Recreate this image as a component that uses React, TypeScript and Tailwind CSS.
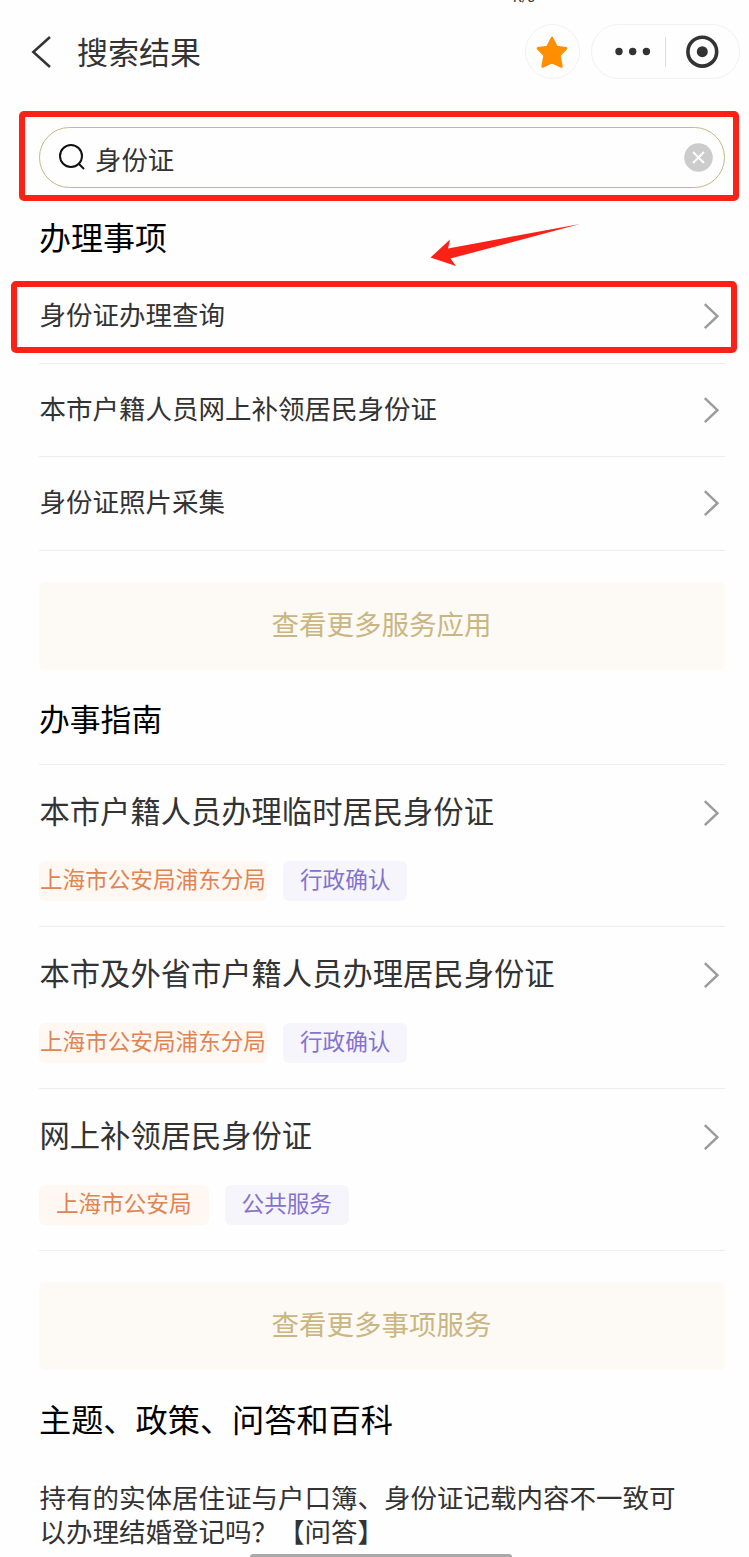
import type { ReactNode } from "react";

const services = [
  "身份证办理查询",
  "本市户籍人员网上补领居民身份证",
  "身份证照片采集",
];

const guides = [
  {
    title: "本市户籍人员办理临时居民身份证",
    office: "上海市公安局浦东分局",
    type: "行政确认",
    tight: true,
  },
  {
    title: "本市及外省市户籍人员办理居民身份证",
    office: "上海市公安局浦东分局",
    type: "行政确认",
    tight: true,
  },
  {
    title: "网上补领居民身份证",
    office: "上海市公安局",
    type: "公共服务",
    tight: false,
  },
];

function Chevron() {
  return (
    <svg className="mr-1 h-7 w-5 shrink-0" viewBox="0 0 20 28" fill="none">
      <path d="M3.8 2.2L16.4 14.2L3.8 26.2" stroke="#9c9c9c" strokeWidth="2.5" />
    </svg>
  );
}

function MoreButton({ children }: { children: ReactNode }) {
  return (
    <button className="mt-[31px] flex h-[88px] w-full items-center justify-center rounded-md bg-[#fdfaf5] pr-[1px] pb-[4px] text-[27.5px] text-[#cbb682]">
      {children}
    </button>
  );
}

function App() {
  return (
    <div className="relative h-[1557px] w-[749px] overflow-hidden bg-[#fefefe] font-['Noto_Sans_CJK_SC',sans-serif] text-[#333]">
      {/* status bar, scrolled almost out of view */}
      <div className="absolute top-[-11px] left-[513px] text-[14px] leading-[16px] font-['Roboto',sans-serif]">
        K/s
      </div>

      <header className="flex h-[103px] items-center pl-[30px] pr-[9px]">
        <svg className="h-9 w-6" viewBox="0 0 24 36" fill="none">
          <path d="M20 3L3.3 18L20 33" stroke="#333" strokeWidth="2.5" />
        </svg>
        <h1 className="ml-[23px] text-[31px]">搜索结果</h1>
        <div className="ml-auto flex h-[55px] w-[55px] items-center justify-center rounded-full border border-[#f1f1f1]">
          <svg className="mr-[2px] h-8 w-8" viewBox="0 0 32 32">
            <path
              d="M16 2L20.6 11L30 12.3L23.4 19.4L25.4 30.5L16 26L6.6 30.5L8.6 19.4L2 12.3L11.4 11Z"
              fill="#ff8f00"
              stroke="#ff8f00"
              strokeWidth="2.6"
              strokeLinejoin="round"
            />
          </svg>
        </div>
        <div className="ml-[11px] flex h-[55px] w-[149px] items-center rounded-full border border-[#f1f1f1]">
          <svg className="ml-[23px] h-8 w-9" viewBox="0 0 36 32" fill="#333">
            <circle cx="4" cy="15.5" r="3.7" />
            <circle cx="17.7" cy="15.5" r="3.7" />
            <circle cx="31.4" cy="15.5" r="3.7" />
          </svg>
          <div className="ml-[14px] h-[30px] w-px bg-[#ddd]" />
          <svg className="ml-[19px] h-[34px] w-[34px]" viewBox="0 0 34 34">
            <circle cx="17.3" cy="16.7" r="14.4" fill="none" stroke="#333" strokeWidth="3.6" />
            <circle cx="17.3" cy="16.7" r="5.5" fill="#333" />
          </svg>
        </div>
      </header>

      <main className="pt-6 pl-[39px] pr-[24px]">
        <div className="flex h-[61px] w-[686px] items-center rounded-full border-[1.5px] border-[#c5b985] pl-[18px] pr-[11px]">
          <svg className="mb-[2px] h-7 w-7" viewBox="0 0 28 28" fill="none" stroke="#111" strokeWidth="2">
            <circle cx="13" cy="13" r="11" />
            <path d="M20.500 20.500L26 26" />
          </svg>
          <span className="mt-[3px] ml-[9px] text-[26.4px]">身份证</span>
          <svg className="ml-auto h-[29px] w-[29px]" viewBox="0 0 29 29">
            <circle cx="14.5" cy="14.5" r="14.3" fill="#ccc" />
            <path d="M9 9L20 20M20 9L9 20" stroke="#fff" strokeWidth="1.9" />
          </svg>
        </div>

        <h2 className="flex h-[82px] items-center pt-[13px] text-[32px] text-black">
          办理事项
        </h2>
        <ul>
          {services.map((name) => (
            <li
              key={name}
              className="flex h-[93.5px] items-center justify-between border-b-[1.5px] border-[#eee] text-[26.5px]"
            >
              <span className="pb-[4px] pl-[0.5px]">{name}</span>
              <Chevron />
            </li>
          ))}
        </ul>
        <MoreButton>查看更多服务应用</MoreButton>

        <h2 className="flex h-[95px] items-center border-b-[1.5px] border-[#eee] pt-[3px] text-[30.8px] text-black">
          办事指南
        </h2>
        <ul>
          {guides.map((guide) => (
            <li key={guide.title} className="h-[162px] border-b-[1.5px] border-[#eee]">
              <div className="flex h-[96px] items-center justify-between text-[30.3px]">
                <span className="pb-[4px] pl-[0.5px]">{guide.title}</span>
                <Chevron />
              </div>
              <div className="flex gap-4 text-[22.6px]">
                <span
                  className={`flex h-10 items-center rounded-md bg-[#fff8f2] pb-[3px] text-[#e08454] ${
                    guide.tight ? "w-[228px] pl-[1px]" : "px-[17px]"
                  }`}
                >
                  {guide.office}
                </span>
                <span className="flex h-10 items-center rounded-md bg-[#f6f5fb] px-[17px] pb-[3px] text-[#8472cf]">
                  {guide.type}
                </span>
              </div>
            </li>
          ))}
        </ul>
        <MoreButton>查看更多事项服务</MoreButton>

        <h2 className="flex h-[98px] items-center text-[32.2px] text-black">
          主题、政策、问答和百科
        </h2>
        <p className="mt-[12px] w-[650px] pl-[0.5px] text-[26.5px] leading-[34px]">
          持有的实体居住证与户口簿、身份证记载内容不一致可以办理结婚登记吗？【问答】
        </p>
      </main>

      {/* highlight frames and pointer on top of the page */}
      <div className="absolute top-[111px] left-[19px] h-[90px] w-[720px] rounded-[5px] border-6 border-[#fc2116]" />
      <div className="absolute top-[281px] left-[11px] h-[72px] w-[726px] rounded-[5px] border-6 border-[#fc2116]" />
      <svg className="absolute top-[220px] left-[426px] h-[50px] w-[156px]" viewBox="0 0 156 50">
        <path
          d="M154 4L24.5 38.500L30 46L4.500 37.500L24 19.500L22 28.500Z"
          fill="#fc2116"
        />
      </svg>
      <div className="absolute bottom-[-3px] left-[250px] h-[6px] w-[262px] rounded-full bg-[#aaa]" />
    </div>
  );
}

export default App;
